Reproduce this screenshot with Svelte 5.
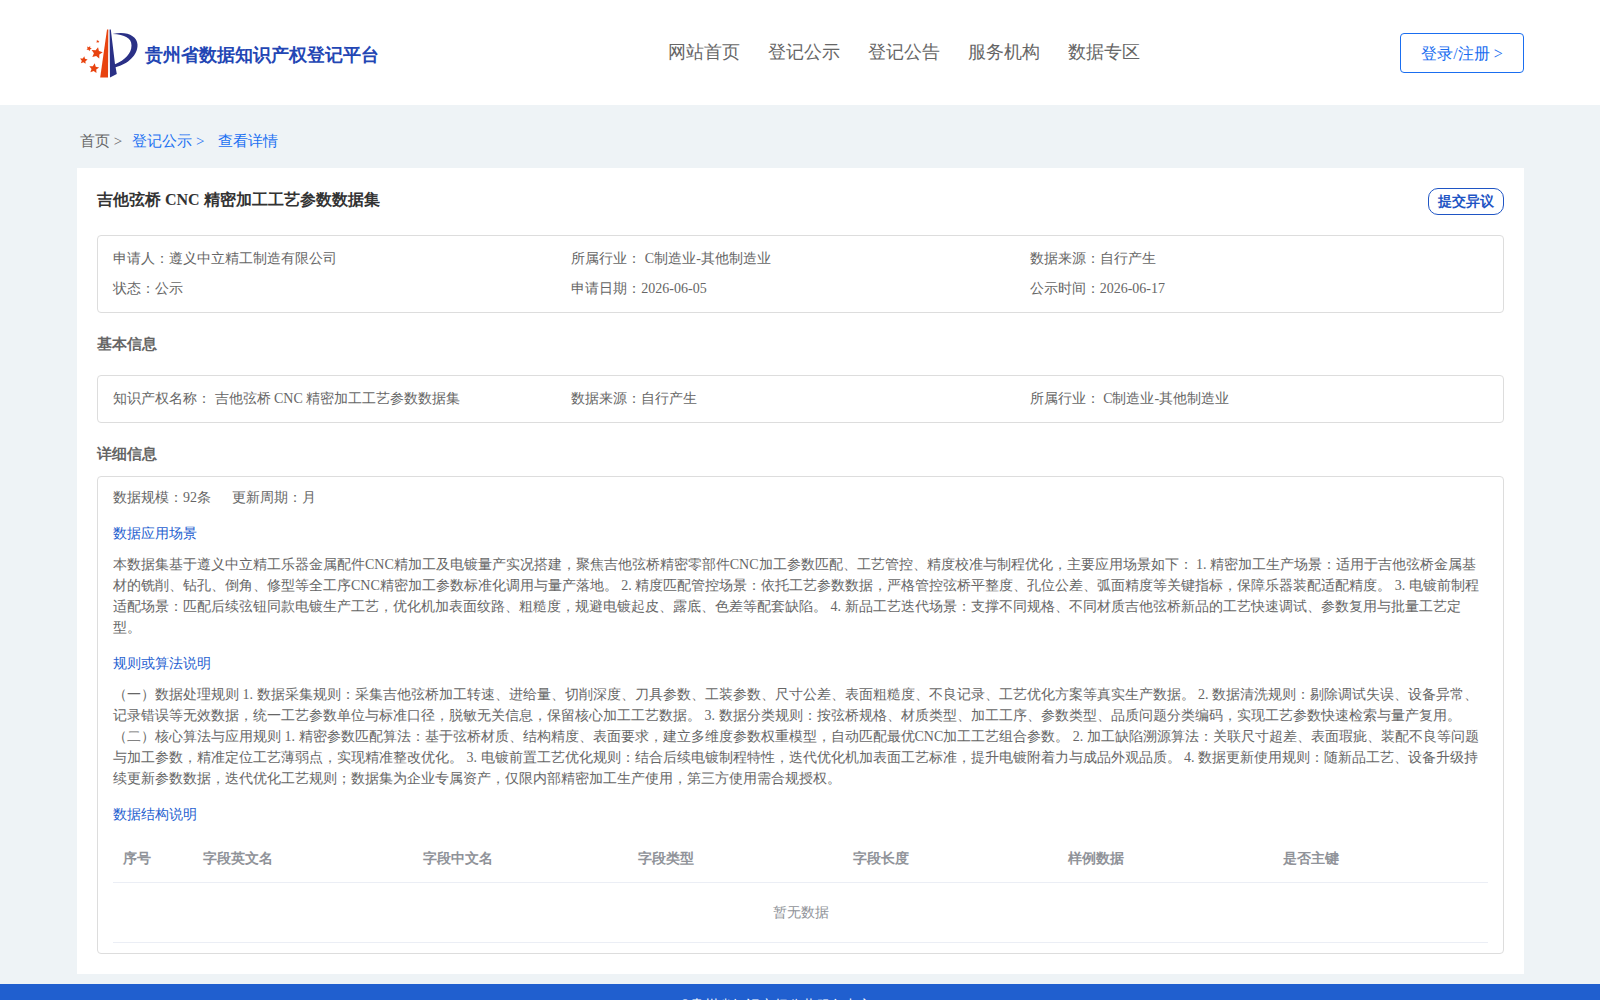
<script>
  const nav = ['网站首页', '登记公示', '登记公告', '服务机构', '数据专区'];
  const summary = [
    '申请人：遵义中立精工制造有限公司',
    '所属行业： C制造业-其他制造业',
    '数据来源：自行产生',
    '状态：公示',
    '申请日期：2026-06-05',
    '公示时间：2026-06-17',
  ];
  const basics = [
    '知识产权名称： 吉他弦桥 CNC 精密加工工艺参数数据集',
    '数据来源：自行产生',
    '所属行业： C制造业-其他制造业',
  ];
  const scenario =
    '本数据集基于遵义中立精工乐器金属配件CNC精加工及电镀量产实况搭建，聚焦吉他弦桥精密零部件CNC加工参数匹配、工艺管控、精度校准与制程优化，主要应用场景如下： 1. 精密加工生产场景：适用于吉他弦桥金属基材的铣削、钻孔、倒角、修型等全工序CNC精密加工参数标准化调用与量产落地。 2. 精度匹配管控场景：依托工艺参数数据，严格管控弦桥平整度、孔位公差、弧面精度等关键指标，保障乐器装配适配精度。 3. 电镀前制程适配场景：匹配后续弦钮同款电镀生产工艺，优化机加表面纹路、粗糙度，规避电镀起皮、露底、色差等配套缺陷。 4. 新品工艺迭代场景：支撑不同规格、不同材质吉他弦桥新品的工艺快速调试、参数复用与批量工艺定型。';
  const rules =
    '（一）数据处理规则 1. 数据采集规则：采集吉他弦桥加工转速、进给量、切削深度、刀具参数、工装参数、尺寸公差、表面粗糙度、不良记录、工艺优化方案等真实生产数据。 2. 数据清洗规则：剔除调试失误、设备异常、记录错误等无效数据，统一工艺参数单位与标准口径，脱敏无关信息，保留核心加工工艺数据。 3. 数据分类规则：按弦桥规格、材质类型、加工工序、参数类型、品质问题分类编码，实现工艺参数快速检索与量产复用。 （二）核心算法与应用规则 1. 精密参数匹配算法：基于弦桥材质、结构精度、表面要求，建立多维度参数权重模型，自动匹配最优CNC加工工艺组合参数。 2. 加工缺陷溯源算法：关联尺寸超差、表面瑕疵、装配不良等问题与加工参数，精准定位工艺薄弱点，实现精准整改优化。 3. 电镀前置工艺优化规则：结合后续电镀制程特性，迭代优化机加表面工艺标准，提升电镀附着力与成品外观品质。 4. 数据更新使用规则：随新品工艺、设备升级持续更新参数数据，迭代优化工艺规则；数据集为企业专属资产，仅限内部精密加工生产使用，第三方使用需合规授权。';
  const columns = ['序号', '字段英文名', '字段中文名', '字段类型', '字段长度', '样例数据', '是否主键'];
  // centre x, centre y, radius, rotation
  const stars = [
    [16.8, 26, 6, 12],
    [14, 41.5, 5.2, 8],
    [3.700, 33.3, 4, 8],
    [9, 21.5, 2.8, 25],
    [17.7, 14.5, 1.7, 10],
  ];
</script>

<div class="page">
  <header>
    <a class="brand" href="#home">
      <svg class="logo" viewBox="0 0 60 52" aria-hidden="true">
        <path fill="#e8430f" d="M27 2.500h1.300L28 50.500h-7.800z" />
        <path fill="#2a3086" d="M29.600 2.500h1.200L35 37.200C45 33 51.500 26.500 51.500 18.500 51.500 11 45 7.500 32.500 7 46 3.500 57 8.500 57.500 17.500 58 28 48 37 35.600 40.300l1.200 6.700-6.800 3.500z" />
        <g fill="#e8430f">
          {#each stars as [x, y, r, turn]}
            <polygon
              points="0,-1 .28,-.4 .95,-.31 .46,.15 .59,.81 0,.5 -.59,.81 -.46,.15 -.95,-.31 -.28,-.4"
              transform="translate({x} {y}) rotate({turn}) scale({r})"
            />
          {/each}
        </g>
      </svg>
      <span>贵州省数据知识产权登记平台</span>
    </a>
    <nav>
      {#each nav as item}<a href="#nav">{item}</a>{/each}
    </nav>
    <button class="login" type="button">登录/注册 &gt;</button>
  </header>

  <div class="crumbs">
    <a class="root" href="#home">首页 &gt;</a>
    <a href="#list">登记公示 &gt;</a>
    <a class="current" href="#detail">查看详情</a>
  </div>

  <main>
    <div class="title">
      <h1>吉他弦桥 CNC 精密加工工艺参数数据集</h1>
      <button class="objection" type="button">提交异议</button>
    </div>

    <section class="box grid">
      {#each summary as item}<div>{item}</div>{/each}
    </section>

    <h2>基本信息</h2>
    <section class="box grid basics">
      {#each basics as item}<div>{item}</div>{/each}
    </section>

    <h2>详细信息</h2>
    <section class="box detail">
      <div class="scale"><span>数据规模：92条</span><span>更新周期：月</span></div>
      <h3>数据应用场景</h3>
      <p>{scenario}</p>
      <h3>规则或算法说明</h3>
      <p>{rules}</p>
      <h3>数据结构说明</h3>
      <table>
        <thead>
          <tr>{#each columns as column}<th scope="col">{column}</th>{/each}</tr>
        </thead>
        <tbody>
          <tr><td colspan="7">暂无数据</td></tr>
        </tbody>
      </table>
    </section>
  </main>

  <footer><span>©贵州省知识产权公共服务中心</span></footer>
</div>

<style>
  :global(body) {
    margin: 0;
    background: #eef3f6;
  }
  .page {
    color: #666;
    font: 14px/21px "Liberation Serif", serif;
  }
  a {
    color: inherit;
    text-decoration: none;
  }
  button {
    font-family: inherit;
    background: #fff;
    cursor: pointer;
  }
  h1, h2, h3, p {
    margin: 0;
  }
  header {
    display: flex;
    justify-content: space-between;
    align-items: center;
    height: 105px;
    padding: 0 76px 0 80px;
    background: #fff;
  }
  .brand {
    display: flex;
    align-items: center;
    gap: 5px;
    min-width: 328px;
    color: #2346b4;
    font-size: 18px;
    font-weight: bold;
  }
  .brand span {
    padding-top: 6px;
  }
  .logo {
    width: 60px;
    height: 52px;
  }
  nav {
    display: flex;
    gap: 28px;
    font-size: 18px;
  }
  .login {
    width: 124px;
    height: 40px;
    padding: 4px 0 0;
    border: 1px solid #1a6ef0;
    border-radius: 4px;
    color: #1a6ef0;
    font-size: 16px;
  }
  .crumbs {
    display: flex;
    gap: 10px;
    padding: 24px 80px 15px;
    color: #1a70f2;
    font-size: 15px;
    line-height: 24px;
  }
  .crumbs .root {
    color: #666;
  }
  .crumbs .current {
    padding-left: 4px;
  }
  main {
    margin: 0 76px 10px 77px;
    padding: 20px;
    background: #fff;
  }
  .title {
    display: flex;
    justify-content: space-between;
    align-items: flex-start;
    margin-bottom: 20px;
  }
  h1 {
    color: #333;
    font-size: 16px;
    line-height: 24px;
  }
  .objection {
    height: 27px;
    padding: 0 9px;
    border: 1px solid #1f55c4;
    border-radius: 10px;
    color: #1f55c4;
    font-size: 14px;
    font-weight: bold;
  }
  .box {
    padding: 8px 15px;
    border: 1px solid #ddd;
    border-radius: 4px;
  }
  .grid {
    display: grid;
    grid-template-columns: repeat(3, 1fr);
    line-height: 30px;
  }
  h2 {
    font-size: 15px;
    line-height: 22px;
    margin: 20px 0;
  }
  .basics + h2 {
    margin-bottom: 11px;
  }
  .detail {
    padding: 10px 15px;
  }
  .scale {
    display: flex;
    gap: 21px;
  }
  h3 {
    margin: 15px 0 10px;
    color: #1f5fd0;
    font-size: 14px;
    font-weight: normal;
  }
  table {
    width: 100%;
    table-layout: fixed;
    border-collapse: separate;
    border-spacing: 0;
    color: #909399;
  }
  th, td {
    box-sizing: border-box;
    border-bottom: 1px solid #ebeef5;
  }
  th {
    height: 48px;
    padding: 0 10px;
    text-align: left;
  }
  th:first-child {
    width: 80px;
  }
  th:nth-child(2) {
    width: 220px;
  }
  td {
    height: 60px;
    padding: 0;
    text-align: center;
  }
  footer {
    padding: 11px 0 20px;
    background: #205fcf;
    color: #fff;
    text-align: center;
  }
  footer span {
    padding-right: 48px;
  }
</style>
